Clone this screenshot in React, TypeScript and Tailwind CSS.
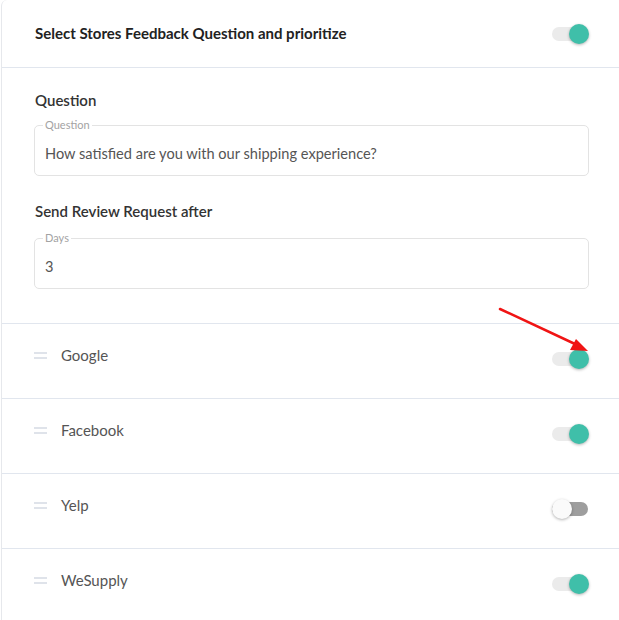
import React, { useState } from 'react';

type Store = { id: string; name: string; enabled: boolean };

const initialStores: Store[] = [
  { id: 'google', name: 'Google', enabled: true },
  { id: 'facebook', name: 'Facebook', enabled: true },
  { id: 'yelp', name: 'Yelp', enabled: false },
  { id: 'wesupply', name: 'WeSupply', enabled: true },
];

function Toggle({ on, onChange }: { on: boolean; onChange: () => void }) {
  return (
    <button type="button" onClick={onChange} className="relative w-[37px] h-[20px] shrink-0">
      <span
        className={`absolute left-0 right-[1px] top-[3px] h-[14px] rounded-full ${on ? 'bg-[#ebebeb]' : 'bg-[#9e9e9e]'}`}
      />
      <span
        className={`absolute top-0 w-[20px] h-[20px] rounded-full shadow-[0_1px_3px_rgba(0,0,0,0.3)] ${
          on ? 'right-0 bg-[#3fbfa9]' : 'left-0 bg-[#fafafa]'
        }`}
      />
    </button>
  );
}

function OutlinedField({ label, value }: { label: string; value: string }) {
  return (
    <div className="relative h-[51px] border border-[#e3e3e3] rounded-[5px] px-[10px] pt-[18px]">
      <span className="absolute -top-[7px] left-[8px] bg-white px-[2px] text-[11px] leading-[12px] text-[#a3a3a3]">
        {label}
      </span>
      <div className="text-[14.6px] leading-[20px] text-[#555]">{value}</div>
    </div>
  );
}

export default function App() {
  const [enabled, setEnabled] = useState(true);
  const [stores, setStores] = useState<Store[]>(initialStores);

  const toggleStore = (id: string) => {
    setStores(prev => prev.map(s => (s.id === id ? { ...s, enabled: !s.enabled } : s)));
  };

  return (
    <div className="relative w-[619px] h-[620px] overflow-hidden bg-white" style={{ fontFamily: 'Lato, "Open Sans", sans-serif' }}>
      <div className="ml-[1px] border-l border-[#e6e8ec] rounded-tl-[6px]">
        {/* header */}
        <div className="flex items-center justify-between pl-[33px] pr-[30px] h-[68px] border-b border-[#e1e6ee]">
          <span className="text-[15px] font-bold text-[#222]">Select Stores Feedback Question and prioritize</span>
          <Toggle on={enabled} onChange={() => setEnabled(!enabled)} />
        </div>

        {/* question settings */}
        <div className="pl-[32px] pr-[30px] pt-[22px] pb-[34px] border-b border-[#e1e6ee]">
          <div className="pl-[1px] text-[15px] font-semibold text-[#333] leading-[20px]">Question</div>
          <div className="mt-[15px]">
            <OutlinedField label="Question" value="How satisfied are you with our shipping experience?" />
          </div>
          <div className="pl-[1px] mt-[25px] text-[15px] font-semibold text-[#333] leading-[20px]">Send Review Request after</div>
          <div className="mt-[17px]">
            <OutlinedField label="Days" value="3" />
          </div>
        </div>

        {/* stores */}
        {stores.map(store => (
          <div key={store.id} className="flex items-start justify-between h-[75px] pl-[32px] pr-[30px] pt-[21px] border-b border-[#e1e6ee]">
            <div className="flex items-center gap-[14px] h-[20px]">
              <span className="flex flex-col gap-[3px] w-[13px]">
                <span className="h-[2px] bg-[#dfe3ea]" />
                <span className="h-[2px] bg-[#dfe3ea]" />
              </span>
              <span className="text-[15px] text-[#555] leading-[20px]">{store.name}</span>
            </div>
            <div className="mt-[4px]">
              <Toggle on={store.enabled} onChange={() => toggleStore(store.id)} />
            </div>
          </div>
        ))}
      </div>

      {/* annotation arrow */}
      <svg className="absolute left-0 top-0 pointer-events-none" width="619" height="620">
        <line x1="500" y1="309" x2="575" y2="344" stroke="#f01414" strokeWidth="2.5" strokeLinecap="round" />
        <polygon points="588,351 570,350 576,339" fill="#f01414" />
      </svg>
    </div>
  );
}
